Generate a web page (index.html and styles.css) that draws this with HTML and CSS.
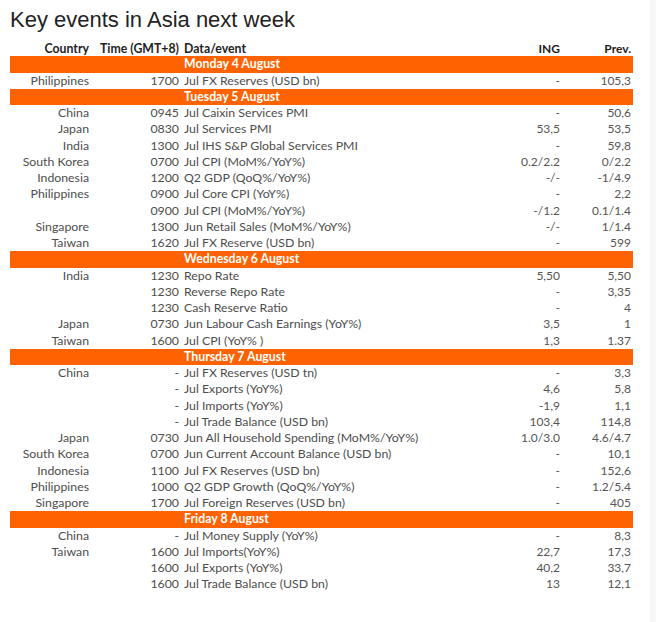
FILE: index.html
```html
<!DOCTYPE html>
<html lang="en">
<head>
<meta charset="utf-8">
<title>Key events in Asia next week</title>
<link rel="stylesheet" href="styles.css">
</head>
<body>
<div class="page">
  <h1 class="title">Key events in Asia next week</h1>
  <table class="events">
    <colgroup>
      <col class="c-country"><col class="c-time"><col class="c-event"><col class="c-ing"><col class="c-prev">
    </colgroup>
    <thead>
      <tr class="head">
        <th class="country">Country</th><th class="time">Time (GMT+8)</th><th class="event">Data/event</th><th class="num">ING</th><th class="num prev">Prev.</th>
      </tr>
    </thead>
    <tbody>
      <tr class="day"><td colspan="2"></td><td colspan="3">Monday 4 August</td></tr>
      <tr><td class="country">Philippines</td><td class="time">1700</td><td class="event">Jul FX Reserves (USD bn)</td><td class="num">-</td><td class="num prev">105,3</td></tr>
      <tr class="day"><td colspan="2"></td><td colspan="3">Tuesday 5 August</td></tr>
      <tr><td class="country">China</td><td class="time">0945</td><td class="event">Jul Caixin Services PMI</td><td class="num">-</td><td class="num prev">50,6</td></tr>
      <tr><td class="country">Japan</td><td class="time">0830</td><td class="event">Jul Services PMI</td><td class="num">53,5</td><td class="num prev">53,5</td></tr>
      <tr><td class="country">India</td><td class="time">1300</td><td class="event">Jul IHS S&amp;P Global Services PMI</td><td class="num">-</td><td class="num prev">59,8</td></tr>
      <tr><td class="country">South Korea</td><td class="time">0700</td><td class="event">Jul CPI (MoM%/YoY%)</td><td class="num">0.2/2.2</td><td class="num prev">0/2.2</td></tr>
      <tr><td class="country">Indonesia</td><td class="time">1200</td><td class="event">Q2 GDP (QoQ%/YoY%)</td><td class="num">-/-</td><td class="num prev">-1/4.9</td></tr>
      <tr><td class="country">Philippines</td><td class="time">0900</td><td class="event">Jul Core CPI (YoY%)</td><td class="num">-</td><td class="num prev">2,2</td></tr>
      <tr><td class="country"></td><td class="time">0900</td><td class="event">Jul CPI (MoM%/YoY%)</td><td class="num">-/1.2</td><td class="num prev">0.1/1.4</td></tr>
      <tr><td class="country">Singapore</td><td class="time">1300</td><td class="event">Jun Retail Sales (MoM%/YoY%)</td><td class="num">-/-</td><td class="num prev">1/1.4</td></tr>
      <tr><td class="country">Taiwan</td><td class="time">1620</td><td class="event">Jul FX Reserve (USD bn)</td><td class="num">-</td><td class="num prev">599</td></tr>
      <tr class="day"><td colspan="2"></td><td colspan="3">Wednesday 6 August</td></tr>
      <tr><td class="country">India</td><td class="time">1230</td><td class="event">Repo Rate</td><td class="num">5,50</td><td class="num prev">5,50</td></tr>
      <tr><td class="country"></td><td class="time">1230</td><td class="event">Reverse Repo Rate</td><td class="num">-</td><td class="num prev">3,35</td></tr>
      <tr><td class="country"></td><td class="time">1230</td><td class="event">Cash Reserve Ratio</td><td class="num">-</td><td class="num prev">4</td></tr>
      <tr><td class="country">Japan</td><td class="time">0730</td><td class="event">Jun Labour Cash Earnings (YoY%)</td><td class="num">3,5</td><td class="num prev">1</td></tr>
      <tr><td class="country">Taiwan</td><td class="time">1600</td><td class="event">Jul CPI (YoY% )</td><td class="num">1,3</td><td class="num prev">1.37</td></tr>
      <tr class="day"><td colspan="2"></td><td colspan="3">Thursday 7 August</td></tr>
      <tr><td class="country">China</td><td class="time">-</td><td class="event">Jul FX Reserves (USD tn)</td><td class="num">-</td><td class="num prev">3,3</td></tr>
      <tr><td class="country"></td><td class="time">-</td><td class="event">Jul Exports (YoY%)</td><td class="num">4,6</td><td class="num prev">5,8</td></tr>
      <tr><td class="country"></td><td class="time">-</td><td class="event">Jul Imports (YoY%)</td><td class="num">-1,9</td><td class="num prev">1,1</td></tr>
      <tr><td class="country"></td><td class="time">-</td><td class="event">Jul Trade Balance (USD bn)</td><td class="num">103,4</td><td class="num prev">114,8</td></tr>
      <tr><td class="country">Japan</td><td class="time">0730</td><td class="event">Jun All Household Spending (MoM%/YoY%)</td><td class="num">1.0/3.0</td><td class="num prev">4.6/4.7</td></tr>
      <tr><td class="country">South Korea</td><td class="time">0700</td><td class="event">Jun Current Account Balance (USD bn)</td><td class="num">-</td><td class="num prev">10,1</td></tr>
      <tr><td class="country">Indonesia</td><td class="time">1100</td><td class="event">Jul FX Reserves (USD bn)</td><td class="num">-</td><td class="num prev">152,6</td></tr>
      <tr><td class="country">Philippines</td><td class="time">1000</td><td class="event">Q2 GDP Growth (QoQ%/YoY%)</td><td class="num">-</td><td class="num prev">1.2/5.4</td></tr>
      <tr><td class="country">Singapore</td><td class="time">1700</td><td class="event">Jul Foreign Reserves (USD bn)</td><td class="num">-</td><td class="num prev">405</td></tr>
      <tr class="day"><td colspan="2"></td><td colspan="3">Friday 8 August</td></tr>
      <tr><td class="country">China</td><td class="time">-</td><td class="event">Jul Money Supply (YoY%)</td><td class="num">-</td><td class="num prev">8,3</td></tr>
      <tr><td class="country">Taiwan</td><td class="time">1600</td><td class="event">Jul Imports(YoY%)</td><td class="num">22,7</td><td class="num prev">17,3</td></tr>
      <tr><td class="country"></td><td class="time">1600</td><td class="event">Jul Exports (YoY%)</td><td class="num">40,2</td><td class="num prev">33,7</td></tr>
      <tr><td class="country"></td><td class="time">1600</td><td class="event">Jul Trade Balance (USD bn)</td><td class="num">13</td><td class="num prev">12,1</td></tr>
    </tbody>
  </table>
</div>
</body>
</html>
```

FILE: styles.css
```css
html, body {
  margin: 0;
  padding: 0;
}
body {
  background: #f7f7f7;
}
.page {
  width: 650px;
  min-height: 622px;
  box-sizing: border-box;
  background: #ffffff;
  padding: 7px 0 0 10px;
}
.title {
  margin: 0;
  font-family: "Liberation Sans", Arial, sans-serif;
  font-weight: normal;
  font-size: 22px;
  line-height: 25px;
  color: #222222;
}
.events {
  margin-top: 8px;
  width: 623px;
  table-layout: fixed;
  border-collapse: collapse;
  border-spacing: 0;
  font-family: Lato, "Open Sans", sans-serif;
  font-size: 12.3px;
  color: #4d4d4d;
}
.c-country { width: 79px; }
.c-time { width: 90px; }
.c-event { width: 301px; }
.c-ing { width: 80px; }
.c-prev { width: 73px; }
.events th,
.events td {
  padding: 0;
  height: 16.25px;
  line-height: 16px;
  white-space: nowrap;
  overflow: hidden;
}
.events th {
  font-weight: bold;
  color: #1e1e1e;
  vertical-align: bottom;
  line-height: 14px;
}
.country, .time, .num {
  text-align: right;
}
.event {
  text-align: left;
  padding-left: 5px !important;
}
.prev {
  padding-right: 2px !important;
}
.num {
  font-size: 12px;
  color: #555555;
}
.day td {
  background: #ff6200;
  color: #ffffff;
  font-weight: bold;
}
.day td + td {
  padding-left: 5px;
}
```
